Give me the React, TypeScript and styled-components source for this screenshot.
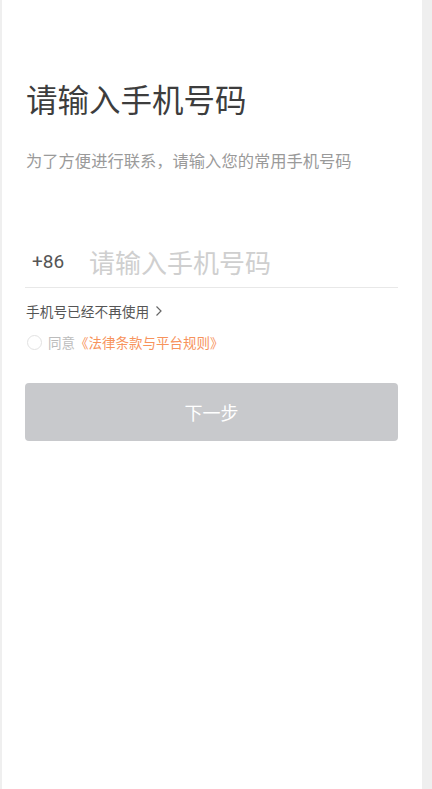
import React from "react";
import styled, { createGlobalStyle } from "styled-components";

const GlobalStyle = createGlobalStyle`
  html, body {
    margin: 0;
    padding: 0;
    background: #efefef;
  }
  body {
    font-family: "Noto Sans CJK SC", "Noto Sans", sans-serif;
  }
`;

export default function App() {
  return (
    <>
      <GlobalStyle />
      <Page>
        <Title>请输入手机号码</Title>
        <Subtitle>为了方便进行联系，请输入您的常用手机号码</Subtitle>
        <PhoneRow>
          <AreaCode>+86</AreaCode>
          <PhoneInput type="tel" placeholder="请输入手机号码" />
        </PhoneRow>
        <LinkRow>
          手机号已经不再使用
          <Chevron viewBox="0 0 8 12">
            <path d="M1.5 1.5 L6 6 L1.5 10.5" fill="none" stroke="#666" strokeWidth="1.2" />
          </Chevron>
        </LinkRow>
        <AgreeRow>
          <Radio />
          <span>同意</span>
          <Terms>《法律条款与平台规则》</Terms>
        </AgreeRow>
        <NextButton disabled>下一步</NextButton>
      </Page>
    </>
  );
}

const Page = styled.div`
  margin-left: 2px;
  width: 420px;
  min-height: 100vh;
  box-sizing: border-box;
  background: #fff;
  padding: 76px 24px 0 23px;
  display: flex;
  flex-direction: column;
`;
const Title = styled.h1`
  margin: 0;
  font-size: 31.5px;
  line-height: 44px;
  font-weight: 400;
  color: #3d3d3d;
  padding-left: 1px;
`;
const Subtitle = styled.p`
  margin: 29px 0 0;
  font-size: 16.3px;
  line-height: 22px;
  color: #9a9a9a;
  padding-left: 1px;
`;
const PhoneRow = styled.div`
  margin-top: 64px;
  display: flex;
  align-items: center;
  height: 52px;
  border-bottom: 1px solid #e8e8e8;
`;
const AreaCode = styled.span`
  font-family: "Roboto", "Noto Sans", sans-serif;
  font-size: 19px;
  color: #555;
  padding-left: 7px;
  width: 57px;
`;
const PhoneInput = styled.input`
  flex: 1;
  border: none;
  outline: none;
  padding: 0;
  font-family: "Noto Sans CJK SC", sans-serif;
  font-size: 26px;
  color: #333;
  background: transparent;
  &::placeholder {
    color: #cfcfcf;
  }
`;
const LinkRow = styled.div`
  margin-top: 13px;
  display: flex;
  align-items: center;
  gap: 6px;
  font-size: 13.7px;
  line-height: 20px;
  color: #555;
  padding-left: 1px;
`;
const Chevron = styled.svg`
  width: 8px;
  height: 12px;
`;
const AgreeRow = styled.div`
  margin-top: 11px;
  display: flex;
  align-items: center;
  font-size: 13.5px;
  line-height: 20px;
  color: #bcbcbc;
  padding-left: 2px;
`;
const Radio = styled.span`
  width: 15px;
  height: 15px;
  box-sizing: border-box;
  border: 1px solid #e2e2e2;
  border-radius: 50%;
  margin-right: 6px;
`;
const Terms = styled.span`
  color: #f7935c;
`;
const NextButton = styled.button`
  margin-top: 31px;
  height: 58px;
  border: none;
  border-radius: 4px;
  background: #c8c9cc;
  color: #fff;
  font-family: "Noto Sans CJK SC", sans-serif;
  font-size: 18px;
  width: 100%;
`;
